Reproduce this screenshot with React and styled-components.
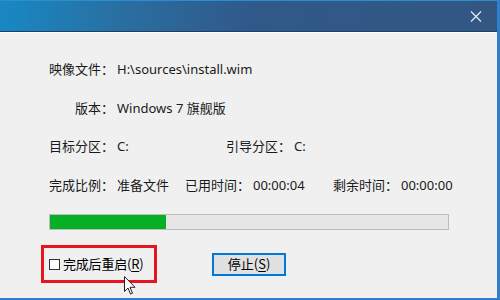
import styled, { createGlobalStyle } from 'styled-components';

const GlobalStyle = createGlobalStyle`
    html, body {
        margin: 0;
        padding: 0;
        background: #f0f0f0;
    }
    body {
        font-family: "Noto Sans", "Noto Sans CJK SC", sans-serif;
        font-size: 13px;
        color: #000;
    }
`;

function CloseIcon() {
    return (
        <svg width="12" height="11" viewBox="0 0 12 11">
            <path d="M1 0.5 L11 10.5 M11 0.5 L1 10.5" stroke="#d6e6f5" strokeWidth="1.4" fill="none" />
        </svg>
    );
}

function Cursor() {
    return (
        <svg width="12" height="19" viewBox="0 0 12 19">
            <path d="M0.5 0.5 L0.5 15.5 L4 12 L6.5 18 L8.5 17.2 L6 11.3 L11 11.3 Z"
                fill="#fff" stroke="#222" strokeWidth="1" strokeLinejoin="round" />
        </svg>
    );
}

function Field({ label, value, width }) {
    return (
        <FieldBox $w={width}>
            <Label>{label}</Label>
            <Value>{value}</Value>
        </FieldBox>
    );
}

export default function App() {
    const progress = 29.25;
    return (
        <>
            <GlobalStyle />
            <Window>
                <TitleBar>
                    <CloseButton><CloseIcon /></CloseButton>
                </TitleBar>
                <Body>
                    <Row>
                        <Field label="映像文件：" value="H:\sources\install.wim" />
                    </Row>
                    <Row>
                        <Field label="版本：" value="Windows 7 旗舰版" />
                    </Row>
                    <Row>
                        <Field label="目标分区：" value="C:" width={177} />
                        <Field label="引导分区：" value="C:" />
                    </Row>
                    <Row>
                        <Field label="完成比例：" value="准备文件" width={136} />
                        <Field label="已用时间：" value="00:00:04" width={148} />
                        <Field label="剩余时间：" value="00:00:00" />
                    </Row>
                    <Progress>
                        <Fill style={{ width: `${progress}%` }} />
                    </Progress>
                    <Footer>
                        <Highlight>
                            <CheckBox />
                            <CheckText>完成后重启(<u>R</u>)</CheckText>
                            <CursorWrap><Cursor /></CursorWrap>
                        </Highlight>
                        <StopButton>停止(<u>S</u>)</StopButton>
                    </Footer>
                </Body>
            </Window>
        </>
    );
}

const Window = styled.div`
    width: 500px;
    height: 300px;
    box-sizing: border-box;
    display: flex;
    flex-direction: column;
    border-right: 3px solid #2f7fcc;
    border-bottom: 2px solid #2f7fcc;
    background: #f0f0f0;
    overflow: hidden;
`;

const TitleBar = styled.div`
    height: 32px;
    flex-shrink: 0;
    display: flex;
    align-items: center;
    justify-content: flex-end;
    padding-right: 14px;
    background: linear-gradient(90deg, #1888c4 0%, #2a6ea0 25%, #30598a 50%, #335781 100%);
    border-top: 1px solid #2a8fd0;
    border-bottom: 1px solid #1d3f66;
    box-shadow: 0 1px 0 #ffffff;
    box-sizing: border-box;
    margin-bottom: 2px;
`;

const CloseButton = styled.div`
    display: flex;
    align-items: center;
    justify-content: center;
    width: 14px;
    height: 14px;
`;

const Body = styled.div`
    flex: 1;
    display: flex;
    flex-direction: column;
    padding: 16px 0 0 49px;
`;

const Row = styled.div`
    display: flex;
    align-items: center;
    height: 38.5px;
`;

const FieldBox = styled.div`
    display: flex;
    align-items: center;
    width: ${p => (p.$w ? `${p.$w}px` : 'auto')};
    flex-shrink: 0;
`;

const Label = styled.span`
    width: 65px;
    text-align: right;
    font-family: "Noto Sans CJK SC", sans-serif;
    line-height: 18px;
    color: #1a1a1a;
`;

const Value = styled.span`
    margin-left: 3px;
    white-space: nowrap;
    line-height: 18px;
    color: #1a1a1a;
`;

const Progress = styled.div`
    margin-top: 10px;
    width: 400px;
    height: 16px;
    box-sizing: border-box;
    border: 1px solid #bcbcbc;
    background: #e6e6e6;
`;

const Fill = styled.div`
    height: 100%;
    background: #06b025;
`;

const Footer = styled.div`
    display: flex;
    align-items: center;
    margin-top: 15px;
`;

const Highlight = styled.div`
    position: relative;
    display: flex;
    align-items: center;
    margin-left: -8px;
    width: 116px;
    height: 38px;
    box-sizing: border-box;
    border: 3px solid #e8141f;
    padding-left: 5px;
`;

const CheckBox = styled.div`
    width: 11px;
    height: 11px;
    box-sizing: border-box;
    border: 1px solid #333;
    background: #fff;
    flex-shrink: 0;
`;

const CheckText = styled.span`
    margin-left: 3px;
    font-family: "Noto Sans CJK SC", sans-serif;
    line-height: 18px;
    white-space: nowrap;
    letter-spacing: -0.2px;
    u {
        text-underline-offset: 2px;
    }
`;

const CursorWrap = styled.div`
    position: absolute;
    left: 80px;
    top: 28px;
    display: flex;
`;

const StopButton = styled.button`
    margin-left: 55px;
    width: 74px;
    height: 23px;
    box-sizing: border-box;
    border: 1px solid #0078d7;
    box-shadow: inset 0 0 0 1px #0078d7;
    background: #e1e1e1;
    font-family: "Noto Sans CJK SC", sans-serif;
    font-size: 13px;
    line-height: 18px;
    color: #000;
    padding: 0;
    u {
        text-underline-offset: 2px;
    }
`;
